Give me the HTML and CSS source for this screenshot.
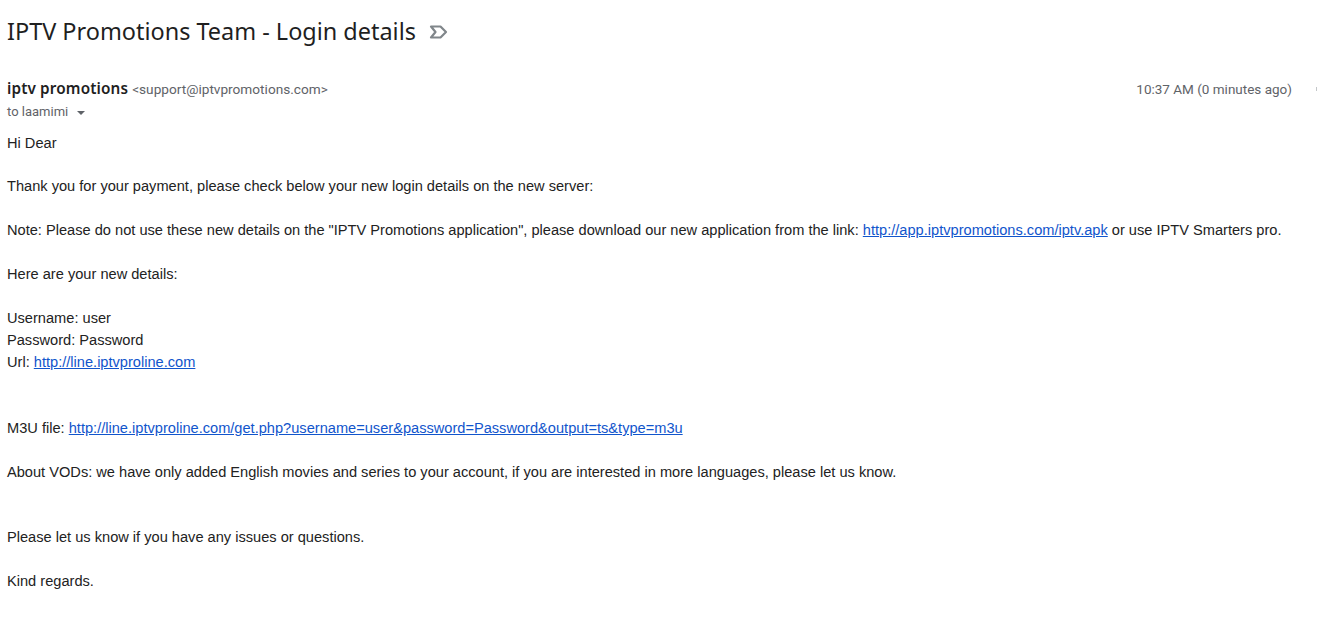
FILE: index.html
```html
<!DOCTYPE html>
<html lang="en">
<head>
<meta charset="utf-8">
<title>IPTV Promotions Team - Login details</title>
<link rel="stylesheet" href="styles.css">
</head>
<body>
<main class="mail">
  <header class="subject-row">
    <h1 class="subject">IPTV Promotions Team - Login details</h1>
    <svg class="label-icon" width="20" height="20" viewBox="0 0 20 20" aria-hidden="true"><path d="M3 4.500H12.500L18 10l-5.500 5.500H3L7.500 10z" fill="none" stroke="#80868a" stroke-width="2.200" stroke-linejoin="round"/></svg>
  </header>
  <div class="meta">
    <div class="sender-row">
      <div class="sender"><span class="name">iptv promotions</span> <span class="address">&lt;support@iptvpromotions.com&gt;</span></div>
      <div class="time">10:37 AM (0 minutes ago)</div>
    </div>
    <div class="to">to laamimi <span class="caret"></span></div>
  </div>
  <div class="body">
    <p class="greeting">Hi Dear</p>
    <p>Thank you for your payment, please check below your new login details on the new server:</p>
    <p>Note: Please do not use these new details on the "IPTV Promotions application", please download our new application from the link: <a href="#">http://app.iptvpromotions.com/iptv.apk</a> or use IPTV Smarters pro.</p>
    <p>Here are your new details:</p>
    <p>Username: user<br>Password: Password<br>Url: <a href="#">http://line.iptvproline.com</a></p>
    <p class="wide-first">M3U file: <a href="#">http://line.iptvproline.com/get.php?username=user&amp;password=Password&amp;output=ts&amp;type=m3u</a></p>
    <p>About VODs: we have only added English movies and series to your account, if you are interested in more languages, please let us know.</p>
    <p class="wide">Please let us know if you have any issues or questions.</p>
    <p>Kind regards.</p>
  </div>
</main>
<span class="edge-mark"></span>
</body>
</html>
```
FILE: styles.css
```css
html, body { margin: 0; background: #fff; }
body { font-family: Roboto, "Liberation Sans", sans-serif; overflow: hidden; }
.mail { padding: 15px 25px 0 7px; }
.subject-row { display: flex; align-items: center; gap: 12px; height: 32px; }
.subject { margin: 0; font-family: "Noto Sans", sans-serif; font-size: 23.450px; font-weight: 400; color: #1f1f1f; line-height: 32px; }
.label-icon { position: relative; top: 1px; }
.meta { margin-top: 29px; }
.sender-row { display: flex; justify-content: space-between; align-items: baseline; line-height: 24px; }
.name { font-family: "Noto Sans", sans-serif; font-size: 15.300px; font-weight: 600; letter-spacing: .13px; color: #1f1f1f; }
.address { font-size: 13.650px; color: #5f6368; }
.time { font-size: 13.500px; color: #5f6368; }
.to { font-size: 13px; color: #5f6368; line-height: 20px; padding-top: 1px; }
.caret { display: inline-block; margin-left: 6px; vertical-align: 1px; border: 4px solid transparent; border-top-color: #5f6368; border-bottom: 0; }
.body { margin-top: 10px; font-family: "Liberation Sans", Arial, sans-serif; font-size: 14.620px; line-height: 22px; color: #222; }
.body p { margin: 0 0 22px; }
.body p.greeting { margin-bottom: 21px; }
.body p.wide-first { margin-top: 44px; }
.body p.wide { margin-top: 43px; }
.body a { color: #1155cc; }
.edge-mark { position: absolute; left: 1316px; top: 87px; width: 1px; height: 4px; background: #c4c7c9; }
```
